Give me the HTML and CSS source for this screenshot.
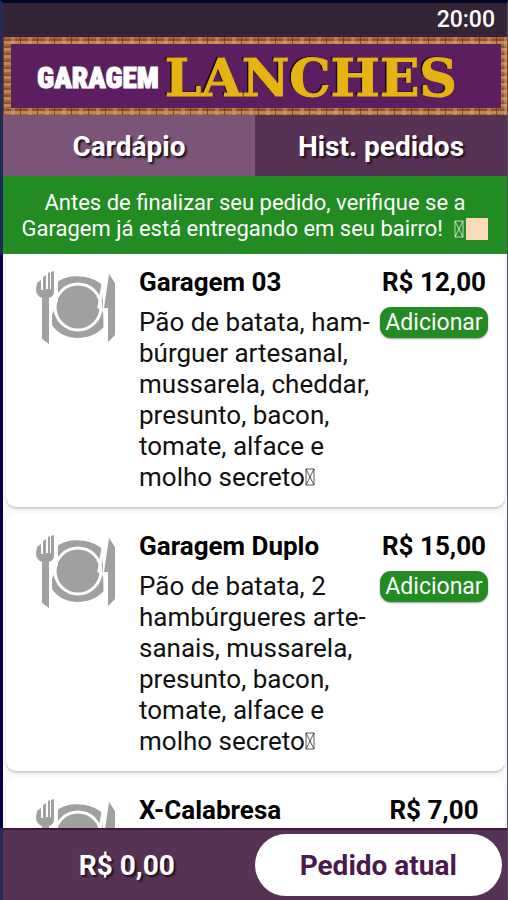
FILE: index.html
```html
<!DOCTYPE html>
<html lang="pt-BR">
<head>
    <meta charset="UTF-8">
    <meta name="viewport" content="width=device-width, initial-scale=1.0">
    <title>Garagem Lanches</title>
    <link rel="stylesheet" href="styles.css">
</head>
<body>

    <svg class="defs" width="0" height="0" aria-hidden="true">
        <symbol id="plate" viewBox="0 0 79 74">
            <path d="M22 11C31 3 54 3 66 14L68 56C54 71 27 71 16 54V44L22 30Z"/>
            <circle cx="42" cy="36" r="23" fill="none" stroke="#fff" stroke-width="3"/>
            <path d="M67 13L63 36L66 39H69V62" fill="none" stroke="#fff" stroke-width="3"/>
            <path d="M1 12L5 9V19H7V6L10 4V18H12V2L14 1V18H15V1L18 0V20C18 24 16 26 13 27V73L6 68V27C3 26 0 23 0 18Z"/>
            <path d="M73 3L79 12V64L72 71V37H68Z"/>
        </symbol>
        <symbol id="unknown" viewBox="0 0 10 18">
            <path d="M1 1H9V17H1ZM1 1L9 17M9 1L1 17" fill="none" stroke="currentColor" stroke-opacity="0.7"/>
        </symbol>
    </svg>

    <div class="app">
        <div class="status">20:00</div>

        <header class="banner">
            <h1 class="logo">
                <span class="logo-small">GARAGEM</span>
                <span class="logo-big">LANCHES</span>
            </h1>
        </header>

        <nav class="tabs">
            <button class="tab active">Cardápio</button>
            <button class="tab">Hist. pedidos</button>
        </nav>

        <p class="notice">Antes de finalizar seu pedido, verifique se a Garagem já está entregando em seu bairro! <span class="marks"><svg class="unknown"><use href="#unknown"/></svg><span class="swatch"></span></span></p>

        <main class="menu">
            <article class="card">
                <svg class="plate"><use href="#plate"/></svg>
                <div class="info">
                    <h2>Garagem 03</h2>
                    <p>Pão de batata, ham&shy;búrguer artesanal, mussarela, cheddar, presunto, bacon, tomate, alface e molho secreto<svg class="unknown"><use href="#unknown"/></svg></p>
                </div>
                <div class="buy">
                    <div class="price">R$ 12,00</div>
                    <button class="add">Adicionar</button>
                </div>
            </article>

            <article class="card">
                <svg class="plate"><use href="#plate"/></svg>
                <div class="info">
                    <h2>Garagem Duplo</h2>
                    <p>Pão de batata, 2 hambúrgueres arte&shy;sanais, mussarela, presunto, bacon, tomate, alface e molho secreto<svg class="unknown"><use href="#unknown"/></svg></p>
                </div>
                <div class="buy">
                    <div class="price">R$ 15,00</div>
                    <button class="add">Adicionar</button>
                </div>
            </article>

            <article class="card">
                <svg class="plate"><use href="#plate"/></svg>
                <div class="info">
                    <h2>X-Calabresa</h2>
                </div>
                <div class="buy">
                    <div class="price">R$ 7,00</div>
                </div>
            </article>
        </main>

        <footer class="order">
            <div class="total">R$ 0,00</div>
            <button class="current">Pedido atual</button>
        </footer>
    </div>

</body>
</html>
```
FILE: styles.css
```css
* {
    box-sizing: border-box;
}
body {
    margin: 0;
    font-family: Roboto, "Liberation Sans", sans-serif;
    background: #fafafa;
}
h1, h2, p {
    margin: 0;
}
button {
    border: 0;
    padding: 0;
    font-family: inherit;
    cursor: pointer;
}
.defs {
    display: block;
}
.app {
    display: flex;
    flex-direction: column;
    height: 100vh;
    border-top: 3px solid #050824;
    border-left: 3px solid #222a58;
    border-right: 1px solid #55505c;
}
.status {
    height: 34px;
    padding-right: 12px;
    line-height: 34px;
    font-size: 23px;
    font-weight: 500;
    text-align: right;
    color: #fff;
    background: #352435;
}

/* stone frame around the logo */
.banner {
    height: 78px;
    padding: 7px 6px 7px 8px;
    background:
        repeating-linear-gradient(90deg, rgba(100, 48, 22, 0.7) 0 1px, transparent 1px 8px, rgba(230, 170, 120, 0.4) 8px 12px, transparent 12px 17px),
        repeating-linear-gradient(#a5653c 0 2px, #8f4f2b 2px 4px, #c18654 4px 7px);
}
.logo {
    display: flex;
    align-items: center;
    gap: 6px;
    height: 64px;
    padding: 4px 0 0 26px;
    background: #5b1f60;
}
.logo-small {
    font-family: "Roboto Condensed", "Open Sans Condensed", Roboto, sans-serif;
    font-size: 29px;
    font-weight: 900;
    line-height: 60px;
    color: #fff;
    -webkit-text-stroke: 1px #fff;
}
.logo-big {
    font-family: "DejaVu Serif", serif;
    font-size: 52px;
    line-height: 60px;
    color: #e5b312;
    -webkit-text-stroke: 1px #e5b312;
    text-shadow: -2px -1px 0 #150a14;
}

.tabs {
    display: flex;
}
.tab {
    flex: 1;
    height: 61px;
    padding-top: 2px;
    font-size: 28px;
    font-weight: 700;
    color: #fff;
    background: #563355;
    text-shadow: 2px 2px 2px #1d0d1d;
}
.tab.active {
    background: #7a5578;
}
.notice {
    padding: 14px 8px 12px;
    font-size: 22px;
    line-height: 26px;
    text-align: center;
    color: #fff;
    background: #228b22;
}
.marks {
    display: inline-flex;
    align-items: center;
    gap: 2px;
    vertical-align: bottom;
    height: 26px;
    margin-left: 6px;
}
.unknown {
    width: 10px;
    height: 18px;
}
.swatch {
    width: 22px;
    height: 22px;
    background: #fadcbc;
}

.menu {
    flex: 1;
    min-height: 0;
    overflow: hidden;
    margin-left: -3px;
    padding: 0 2px 0 3px;
    border-left: 3px solid #05004a;
}
.card {
    display: grid;
    grid-template-columns: 79px 1fr 110px;
    margin-bottom: 7px;
    padding: 17px 16px 13px 30px;
    border-radius: 10px;
    background: #fff;
    box-shadow: 0 2px 2px #ccc;
}
.card:first-child {
    padding-top: 13px;
    border-radius: 0 0 10px 10px;
}
.plate {
    width: 79px;
    height: 74px;
    margin-top: 4px;
    fill: #a0a0a0;
}
.info {
    padding-left: 24px;
}
.info h2, .price {
    margin-bottom: 10px;
    font-size: 26px;
    line-height: 30px;
    font-weight: 700;
    color: #000;
}
.info p {
    margin-bottom: 1px;
    font-size: 26px;
    line-height: 31px;
    color: #111;
}
.buy {
    text-align: center;
    white-space: nowrap;
}
.add {
    width: 108px;
    height: 31px;
    border-radius: 11px;
    font-size: 23px;
    color: #fff;
    background: #228b22;
    box-shadow: 0 1px 2px #999;
}

.order {
    display: flex;
    align-items: center;
    gap: 4px;
    height: 72px;
    padding-right: 5px;
    background: #563355;
    border-top: 2px solid #44133f;
}
.total {
    flex: 1;
    font-size: 28px;
    font-weight: 700;
    text-align: center;
    color: #fff;
    text-shadow: 2px 2px 2px #1d0d1d;
}
.current {
    flex: 1;
    height: 62px;
    border-radius: 31px;
    font-size: 28px;
    font-weight: 700;
    color: #4a1a4c;
    background: #fff;
}
```
